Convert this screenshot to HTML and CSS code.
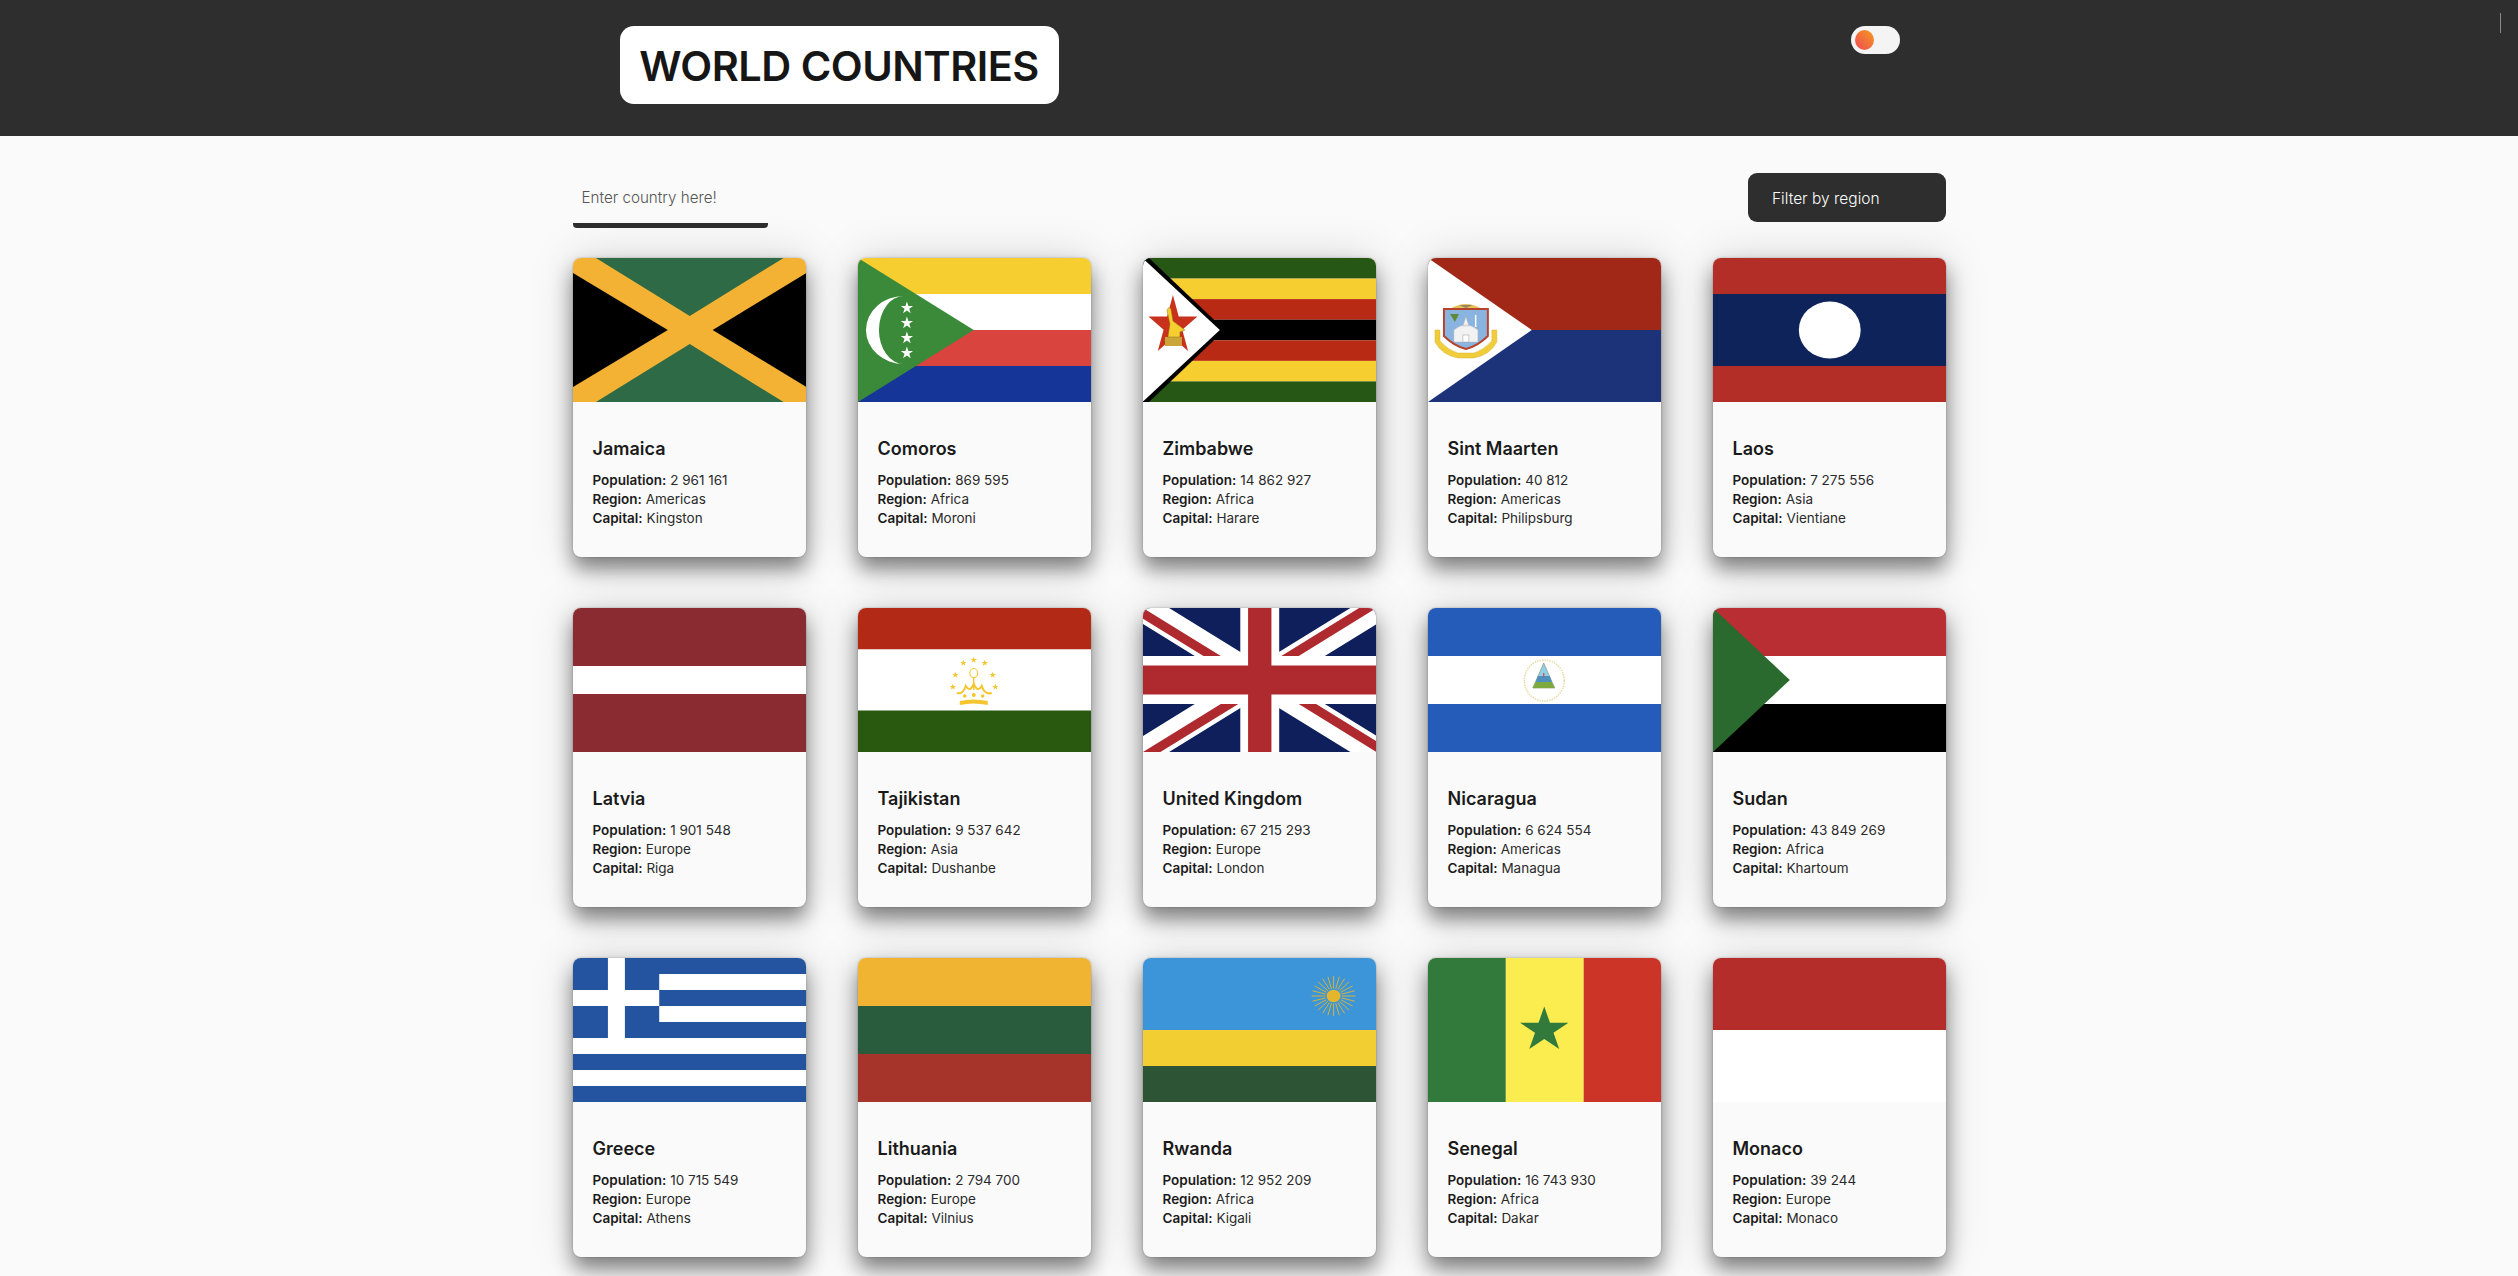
FILE: index.html
```html
<!DOCTYPE html>
<html lang="en">
<head>
    <meta charset="UTF-8">
    <meta name="viewport" content="width=device-width, initial-scale=1.0">
    <title>World Countries</title>
    <link rel="stylesheet" href="styles.css">
</head>
<body>
    <svg class="defs" width="0" height="0" aria-hidden="true">
        <defs>
            <polygon id="star" points="0,-1 .225,-.309 .951,-.309 .363,.118 .588,.809 0,.382 -.588,.809 -.363,.118 -.951,-.309 -.225,-.309"/>
            <clipPath id="jack-clip"><path d="M30,15 h30 v15 z v15 h-30 z h-30 v-15 z v-15 h30 z"/></clipPath>
        </defs>
    </svg>

    <header class="header">
        <div class="header-inner">
            <h1 class="logo">WORLD COUNTRIES</h1>
            <div class="toggle"><span class="toggle-knob"></span></div>
        </div>
        <span class="scroll-mark"></span>
    </header>

    <main class="container">
        <div class="toolbar">
            <input class="search" type="text" placeholder="Enter country here!">
            <div class="filter">Filter by region</div>
        </div>

        <div class="grid">
            <article class="card">
                <svg class="flag" viewBox="0 0 234 144" preserveAspectRatio="none">
                    <rect width="234" height="144" fill="#f3b234"/>
                    <polygon points="23,0 211,0 117,58" fill="#2d6a45"/>
                    <polygon points="23,144 211,144 117,86" fill="#2d6a45"/>
                    <polygon points="0,15 95,72 0,129" fill="#000"/>
                    <polygon points="234,15 140,72 234,129" fill="#000"/>
                </svg>
                <div class="card-body">
                    <h2>Jamaica</h2>
                    <p><b>Population:</b> 2 961 161</p>
                    <p><b>Region:</b> Americas</p>
                    <p><b>Capital:</b> Kingston</p>
                </div>
            </article>

            <article class="card">
                <svg class="flag" viewBox="0 0 234 144" preserveAspectRatio="none">
                    <rect width="234" height="36" fill="#f6ce2f"/>
                    <rect y="36" width="234" height="36" fill="#fff"/>
                    <rect y="72" width="234" height="36" fill="#d9443f"/>
                    <rect y="108" width="234" height="36" fill="#163599"/>
                    <polygon points="0,0 116,72 0,144" fill="#3b8a3a"/>
                    <path d="M46,38 A38,34 0 0 0 46,106 A25,34 0 0 1 46,38 Z" fill="#fff"/>
                    <g fill="#fff">
                        <use href="#star" transform="translate(49,50) scale(6.5)"/>
                        <use href="#star" transform="translate(49,65) scale(6.5)"/>
                        <use href="#star" transform="translate(49,80) scale(6.5)"/>
                        <use href="#star" transform="translate(49,95) scale(6.5)"/>
                    </g>
                </svg>
                <div class="card-body">
                    <h2>Comoros</h2>
                    <p><b>Population:</b> 869 595</p>
                    <p><b>Region:</b> Africa</p>
                    <p><b>Capital:</b> Moroni</p>
                </div>
            </article>

            <article class="card">
                <svg class="flag" viewBox="0 0 234 144" preserveAspectRatio="none">
                    <rect width="234" height="20.6" fill="#265714"/>
                    <rect y="20.6" width="234" height="20.6" fill="#f6ce2f"/>
                    <rect y="41.1" width="234" height="20.6" fill="#b82a13"/>
                    <rect y="61.7" width="234" height="20.6" fill="#000"/>
                    <rect y="82.3" width="234" height="20.6" fill="#b82a13"/>
                    <rect y="102.9" width="234" height="20.6" fill="#f6ce2f"/>
                    <rect y="123.4" width="234" height="20.6" fill="#265714"/>
                    <polygon points="0,0 6,0 82,72 6,144 0,144" fill="#000"/>
                    <polygon points="0,.5 77,72 0,143.5" fill="#fff"/>
                    <use href="#star" transform="translate(30,68) scale(25.8,31)" fill="#c8321c"/>
                    <rect x="22" y="79" width="17" height="9" fill="#c9a53a"/>
                    <path d="M24,52 Q26,48 28,51 L30,63 L42,72 L37,74 L37,79 L25,79 L27,66 Z" fill="#f6ce2f" stroke="#8f7414" stroke-width=".5"/>
                </svg>
                <div class="card-body">
                    <h2>Zimbabwe</h2>
                    <p><b>Population:</b> 14 862 927</p>
                    <p><b>Region:</b> Africa</p>
                    <p><b>Capital:</b> Harare</p>
                </div>
            </article>

            <article class="card">
                <svg class="flag" viewBox="0 0 234 144" preserveAspectRatio="none">
                    <rect width="234" height="72" fill="#a12816"/>
                    <rect y="72" width="234" height="72" fill="#1c337a"/>
                    <polygon points="0,0 104,72 0,144" fill="#fff"/>
                    <path d="M7,72 L7,84 Q14,97 30,100 L46,100 Q62,97 69,84 L69,72 L64,72 L64,83 Q56,92 46,95 L30,95 Q20,92 12,83 L12,72 Z" fill="#f2cd3a" stroke="#c9a72c" stroke-width=".4"/>
                    <path d="M22,51 Q38,41 54,51 L38,54 Z" fill="#e6c25a"/>
                    <path d="M31,47 L45,47 L38,50 Z" fill="#9a8460"/>
                    <path d="M16,51 H60 V78 Q50,88 38,91 Q26,88 16,78 Z" fill="#8ab4e0" stroke="#b8432c" stroke-width="2"/>
                    <polygon points="22,56 31,56 27,64" fill="#5d8a3a"/>
                    <rect x="47" y="57" width="1.5" height="12" fill="#fff"/>
                    <path d="M26,84 V72 Q38,62 50,72 V84 Z M35,68 L38,59 L41,68 Z" fill="#f2f2f2" stroke="#bdbdbd" stroke-width=".5"/>
                    <rect x="35" y="77" width="6" height="7" fill="#fff" stroke="#999" stroke-width=".5"/>
                </svg>
                <div class="card-body">
                    <h2>Sint Maarten</h2>
                    <p><b>Population:</b> 40 812</p>
                    <p><b>Region:</b> Americas</p>
                    <p><b>Capital:</b> Philipsburg</p>
                </div>
            </article>

            <article class="card">
                <svg class="flag" viewBox="0 0 234 144" preserveAspectRatio="none">
                    <rect width="234" height="144" fill="#b32e27"/>
                    <rect y="36" width="234" height="72" fill="#0f235b"/>
                    <ellipse cx="117" cy="72" rx="31" ry="28.5" fill="#fff"/>
                </svg>
                <div class="card-body">
                    <h2>Laos</h2>
                    <p><b>Population:</b> 7 275 556</p>
                    <p><b>Region:</b> Asia</p>
                    <p><b>Capital:</b> Vientiane</p>
                </div>
            </article>

            <article class="card">
                <svg class="flag" viewBox="0 0 234 144" preserveAspectRatio="none">
                    <rect width="234" height="144" fill="#8a2a31"/>
                    <rect y="58" width="234" height="28" fill="#fff"/>
                </svg>
                <div class="card-body">
                    <h2>Latvia</h2>
                    <p><b>Population:</b> 1 901 548</p>
                    <p><b>Region:</b> Europe</p>
                    <p><b>Capital:</b> Riga</p>
                </div>
            </article>

            <article class="card">
                <svg class="flag" viewBox="0 0 234 144" preserveAspectRatio="none">
                    <rect width="234" height="41.5" fill="#b22a15"/>
                    <rect y="41.5" width="234" height="61" fill="#fff"/>
                    <rect y="102.5" width="234" height="41.5" fill="#29590f"/>
                    <g fill="#f5c52e">
                        <use href="#star" transform="translate(116,52) scale(3.4)"/>
                        <use href="#star" transform="translate(105.5,55) scale(3.4)"/>
                        <use href="#star" transform="translate(127,55) scale(3.4)"/>
                        <use href="#star" transform="translate(97.5,67) scale(3.4)"/>
                        <use href="#star" transform="translate(135,67) scale(3.4)"/>
                        <use href="#star" transform="translate(95,79) scale(3.4)"/>
                        <use href="#star" transform="translate(137.7,79) scale(3.4)"/>
                        <path d="M102,93 Q116,90 130,93 L130,97 Q116,94 102,97 Z"/>
                        <circle cx="107" cy="88" r="1.8"/>
                        <circle cx="116" cy="87" r="2"/>
                        <circle cx="125" cy="88" r="1.8"/>
                    </g>
                    <g fill="none" stroke="#f5c52e">
                        <path d="M99,85 Q105,87 108,78 Q112,85 116,76 Q120,85 124,78 Q127,87 134,85" stroke-width="2"/>
                        <path d="M116,69 V82" stroke-width="1.4"/>
                        <ellipse cx="116" cy="65" rx="4" ry="4.5" stroke-width="1.1"/>
                    </g>
                </svg>
                <div class="card-body">
                    <h2>Tajikistan</h2>
                    <p><b>Population:</b> 9 537 642</p>
                    <p><b>Region:</b> Asia</p>
                    <p><b>Capital:</b> Dushanbe</p>
                </div>
            </article>

            <article class="card">
                <svg class="flag" viewBox="0 0 60 30" preserveAspectRatio="none">
                    <rect width="60" height="30" fill="#0e1f5c"/>
                    <path d="M0,0 L60,30 M60,0 L0,30" stroke="#fff" stroke-width="6"/>
                    <path d="M0,0 L60,30 M60,0 L0,30" clip-path="url(#jack-clip)" stroke="#ae2a2e" stroke-width="4"/>
                    <path d="M30,0 v30 M0,15 h60" stroke="#fff" stroke-width="10"/>
                    <path d="M30,0 v30 M0,15 h60" stroke="#ae2a2e" stroke-width="6"/>
                </svg>
                <div class="card-body">
                    <h2>United Kingdom</h2>
                    <p><b>Population:</b> 67 215 293</p>
                    <p><b>Region:</b> Europe</p>
                    <p><b>Capital:</b> London</p>
                </div>
            </article>

            <article class="card">
                <svg class="flag" viewBox="0 0 234 144" preserveAspectRatio="none">
                    <rect width="234" height="144" fill="#255cb9"/>
                    <rect y="48" width="234" height="48" fill="#fff"/>
                    <ellipse cx="116.5" cy="72.5" rx="20" ry="20.5" fill="none" stroke="#e8dca8" stroke-width="1.6" stroke-dasharray="1.5 1"/>
                    <polygon points="116,55 127,80 105,80" fill="#8fd0ea" stroke="#8a8a5a" stroke-width=".6"/>
                    <polygon points="110,68 122,68 124,74 108,74" fill="#4f8fc0"/>
                    <polygon points="108,74 124,74 127,80 105,80" fill="#7ea93f"/>
                    <rect x="115.4" y="65" width="1.2" height="4" fill="#d9443f"/>
                </svg>
                <div class="card-body">
                    <h2>Nicaragua</h2>
                    <p><b>Population:</b> 6 624 554</p>
                    <p><b>Region:</b> Americas</p>
                    <p><b>Capital:</b> Managua</p>
                </div>
            </article>

            <article class="card">
                <svg class="flag" viewBox="0 0 234 144" preserveAspectRatio="none">
                    <rect width="234" height="48" fill="#b92e33"/>
                    <rect y="48" width="234" height="48" fill="#fff"/>
                    <rect y="96" width="234" height="48" fill="#000"/>
                    <polygon points="0,0 77,72 0,144" fill="#2b6a2e"/>
                </svg>
                <div class="card-body">
                    <h2>Sudan</h2>
                    <p><b>Population:</b> 43 849 269</p>
                    <p><b>Region:</b> Africa</p>
                    <p><b>Capital:</b> Khartoum</p>
                </div>
            </article>

            <article class="card">
                <svg class="flag" viewBox="0 0 234 144" preserveAspectRatio="none">
                    <rect width="234" height="144" fill="#24549f"/>
                    <g fill="#fff">
                        <rect x="86.4" y="16" width="148" height="16"/>
                        <rect x="86.4" y="48" width="148" height="16"/>
                        <rect y="80" width="234" height="16"/>
                        <rect y="112" width="234" height="16"/>
                        <rect x="35" width="17" height="80"/>
                        <rect y="32" width="86.4" height="16"/>
                    </g>
                </svg>
                <div class="card-body">
                    <h2>Greece</h2>
                    <p><b>Population:</b> 10 715 549</p>
                    <p><b>Region:</b> Europe</p>
                    <p><b>Capital:</b> Athens</p>
                </div>
            </article>

            <article class="card">
                <svg class="flag" viewBox="0 0 234 144" preserveAspectRatio="none">
                    <rect width="234" height="48" fill="#f1b432"/>
                    <rect y="48" width="234" height="48" fill="#295c3d"/>
                    <rect y="96" width="234" height="48" fill="#a6342b"/>
                </svg>
                <div class="card-body">
                    <h2>Lithuania</h2>
                    <p><b>Population:</b> 2 794 700</p>
                    <p><b>Region:</b> Europe</p>
                    <p><b>Capital:</b> Vilnius</p>
                </div>
            </article>

            <article class="card">
                <svg class="flag" viewBox="0 0 234 144" preserveAspectRatio="none">
                    <rect width="234" height="72" fill="#3c95d8"/>
                    <rect y="72" width="234" height="36" fill="#f3ce32"/>
                    <rect y="108" width="234" height="36" fill="#2c5435"/>
                    <g transform="translate(191,38)">
                        <path d="M-22,0 H22 M-21.2,-5.2 L21.2,5.2 M-19,-10 L19,10 M-15.5,-14.1 L15.5,14.1 M-11,-17.3 L11,17.3 M-5.7,-19.3 L5.7,19.3 M0,-20 V20 M5.7,-19.3 L-5.7,19.3 M11,-17.3 L-11,17.3 M15.5,-14.1 L-15.5,14.1 M19,-10 L-19,10 M21.2,-5.2 L-21.2,5.2" stroke="#e3b62c" stroke-width=".9"/>
                        <ellipse rx="8.5" ry="7.5" fill="#3c95d8"/>
                        <ellipse rx="7" ry="6.2" fill="#e3b62c"/>
                    </g>
                </svg>
                <div class="card-body">
                    <h2>Rwanda</h2>
                    <p><b>Population:</b> 12 952 209</p>
                    <p><b>Region:</b> Africa</p>
                    <p><b>Capital:</b> Kigali</p>
                </div>
            </article>

            <article class="card">
                <svg class="flag" viewBox="0 0 234 144" preserveAspectRatio="none">
                    <rect width="78" height="144" fill="#327a3c"/>
                    <rect x="78" width="78" height="144" fill="#fbed50"/>
                    <rect x="156" width="78" height="144" fill="#cc3428"/>
                    <use href="#star" transform="translate(116.5,72) scale(25.5,23.5)" fill="#327a3c"/>
                </svg>
                <div class="card-body">
                    <h2>Senegal</h2>
                    <p><b>Population:</b> 16 743 930</p>
                    <p><b>Region:</b> Africa</p>
                    <p><b>Capital:</b> Dakar</p>
                </div>
            </article>

            <article class="card">
                <svg class="flag" viewBox="0 0 234 144" preserveAspectRatio="none">
                    <rect width="234" height="144" fill="#fff"/>
                    <rect width="234" height="72" fill="#b52d2a"/>
                </svg>
                <div class="card-body">
                    <h2>Monaco</h2>
                    <p><b>Population:</b> 39 244</p>
                    <p><b>Region:</b> Europe</p>
                    <p><b>Capital:</b> Monaco</p>
                </div>
            </article>
        </div>
    </main>
</body>
</html>
```

FILE: styles.css
```css
* {
    box-sizing: border-box;
}
body {
    margin: 0;
    background: #fafafa;
    color: #1a1a1a;
    font-family: Inter, "Noto Sans", sans-serif;
}
.defs {
    position: absolute;
}

/* header */
.header {
    position: relative;
    height: 136px;
    background: #2e2e2e;
}
.header-inner {
    width: 1375px;
    margin: 0 auto;
    padding: 26px 47px 0 48px;
    display: flex;
    justify-content: space-between;
    align-items: flex-start;
}
.logo {
    margin: 0;
    width: 439px;
    height: 78px;
    padding-top: 2px;
    background: white;
    border-radius: 14px;
    display: flex;
    align-items: center;
    justify-content: center;
    font-size: 41.5px;
    font-weight: 600;
    letter-spacing: -0.5px;
    color: #161616;
    white-space: nowrap;
}
.toggle {
    width: 49px;
    height: 28px;
    padding: 4px;
    background: #f4f4f4;
    border-radius: 14px;
}
.toggle-knob {
    display: block;
    width: 19px;
    height: 20px;
    border-radius: 50%;
    background: linear-gradient(45deg, #ef4a55, #f59a1e);
}
.scroll-mark {
    position: absolute;
    left: 2500px;
    top: 13px;
    width: 1px;
    height: 20px;
    background: #8a8a8a;
}

/* search and filter */
.container {
    width: 1375px;
    margin: 0 auto;
    padding: 0 0.5px 19px 1px;
}
.toolbar {
    display: flex;
    justify-content: space-between;
    align-items: flex-start;
    padding-top: 37px;
    margin-bottom: 30px;
}
.search {
    width: 195px;
    height: 55px;
    padding: 4px 9px 5px;
    border: none;
    border-bottom: 5px solid #2e2e2e;
    border-radius: 4px;
    background: transparent;
    font-family: inherit;
    font-size: 15.2px;
    outline: none;
}
.search::placeholder {
    color: #555;
    font-weight: 300;
}
.filter {
    width: 198px;
    height: 49px;
    padding: 2px 0 0 24px;
    display: flex;
    align-items: center;
    background: #2e2e2e;
    border-radius: 9px;
    color: white;
    font-size: 15.5px;
    font-weight: 300;
}

/* country cards */
.grid {
    display: grid;
    grid-template-columns: repeat(5, 1fr);
    column-gap: 51.5px;
    row-gap: 51px;
}
.card {
    height: 299px;
    background: #fafafa;
    border-radius: 8px;
    overflow: hidden;
    box-shadow: 0 12px 20px rgba(0,0,0,0.45), 0 0 2px rgba(0,0,0,0.3), 0 0 45px rgba(0,0,0,0.15);
}
.flag {
    display: block;
    width: 100%;
    height: 144px;
}
.card-body {
    padding: 35px 20px 0;
}
.card-body h2 {
    margin: 0 0 10px;
    font-size: 18px;
    line-height: 24px;
    font-weight: 600;
}
.card-body p {
    margin: 0;
    font-size: 13.5px;
    line-height: 19px;
    font-weight: 400;
    color: #2a2a2a;
}
.card-body b {
    font-weight: 600;
    color: #1a1a1a;
}
```
